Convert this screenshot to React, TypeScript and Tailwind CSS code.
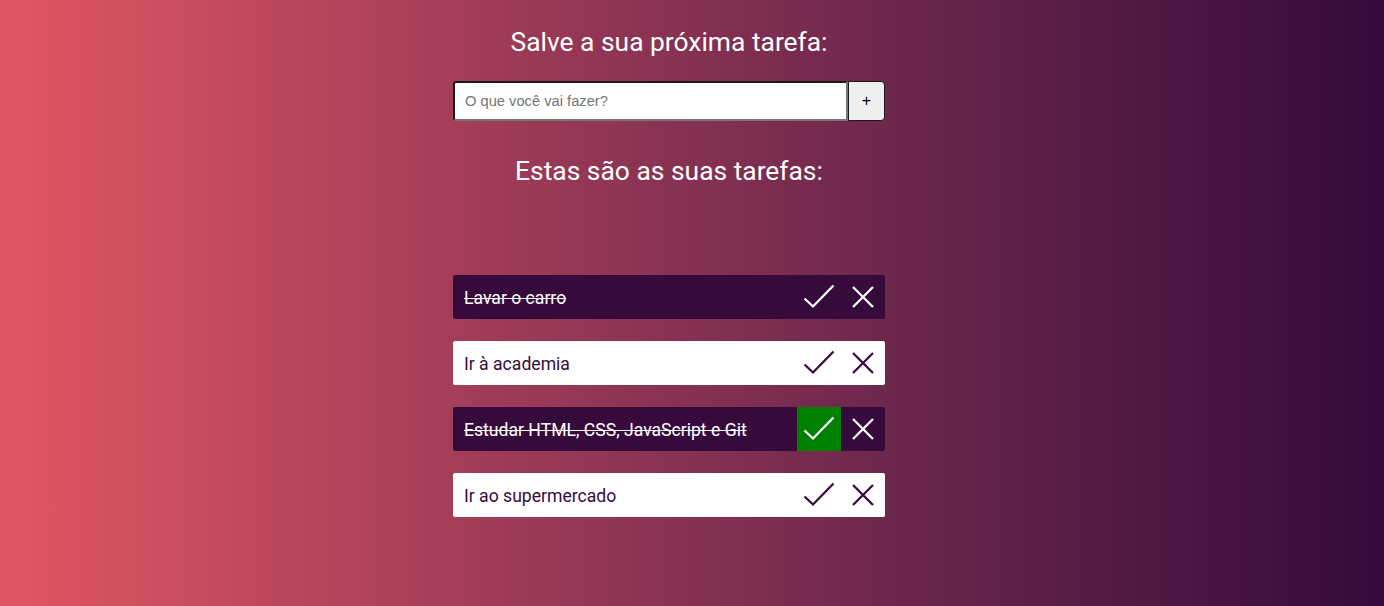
import { useState } from 'react';

type Task = { id: number; text: string; done: boolean; hover?: boolean };

const initialTasks: Task[] = [
  { id: 1, text: 'Lavar o carro', done: true },
  { id: 2, text: 'Ir à academia', done: false },
  { id: 3, text: 'Estudar HTML, CSS, JavaScript e Git', done: true, hover: true },
  { id: 4, text: 'Ir ao supermercado', done: false },
];

function CheckIcon() {
  return (
    <svg width="32" height="26" viewBox="0 0 32 26" fill="none">
      <path d="M1.5 14.5 L10 22.5 L30.5 1.5" stroke="currentColor" strokeWidth="2.3" />
    </svg>
  );
}

function XIcon() {
  return (
    <svg width="24" height="24" viewBox="0 0 24 24" fill="none">
      <path d="M2 2 L22 22 M22 2 L2 22" stroke="currentColor" strokeWidth="2.3" />
    </svg>
  );
}

export default function App() {
  const [tasks, setTasks] = useState<Task[]>(initialTasks);
  const [input, setInput] = useState('');

  const addTask = (e: React.FormEvent) => {
    e.preventDefault();
    if (input.trim()) {
      setTasks([...tasks, { id: Date.now(), text: input, done: false }]);
      setInput('');
    }
  };

  const toggle = (id: number) =>
    setTasks(tasks.map((t) => (t.id === id ? { ...t, done: !t.done } : t)));
  const remove = (id: number) => setTasks(tasks.filter((t) => t.id !== id));

  return (
    <div
      className="min-h-screen w-full bg-gradient-to-r from-[#e25663] to-[#350a3b] flex flex-col items-center pr-[46px] font-['Roboto',sans-serif]"
    >
      <h1 className="text-white text-[26.4px] mt-[24px] leading-[36px]">Salve a sua próxima tarefa:</h1>

      <form onSubmit={addTask} className="flex mt-[21px] w-[432px] h-[40px]">
        <input
          type="text"
          value={input}
          onChange={(e) => setInput(e.target.value)}
          placeholder="O que você vai fazer?"
          className="w-[395px] h-full bg-white px-[10px] text-[14.7px] font-['Liberation_Sans',sans-serif] rounded-l-[3px] border-2 border-t-[#1a1a1a] border-l-[#1a1a1a] border-b-[#767676] border-r-[#767676] placeholder:text-[#757575] outline-none"
        />
        <button
          type="submit"
          className="w-[37px] h-full bg-[#efefef] border border-[#1a1a1a] rounded-r-[4px] text-[16px] text-black font-['Liberation_Sans',sans-serif]"
        >
          +
        </button>
      </form>

      <h2 className="text-white text-[26.4px] mt-[32px] leading-[36px]">Estas são as suas tarefas:</h2>

      <ul className="mt-[86px] flex flex-col gap-[22px] w-[432px]">
        {tasks.map((t) => (
          <li
            key={t.id}
            className={`flex items-center h-[44px] rounded-[2px] overflow-hidden ${
              t.done ? 'bg-[#370a3c] text-white' : 'bg-white text-[#370a3c]'
            }`}
          >
            <span className={`flex-1 pl-[11px] pt-[3px] text-[17.6px] ${t.done ? 'line-through' : ''}`}>{t.text}</span>
            <button
              onClick={() => toggle(t.id)}
              className={`w-[44px] h-full flex items-center justify-center ${t.hover ? 'bg-[#008000] text-white' : ''}`}
            >
              <CheckIcon />
            </button>
            <button onClick={() => remove(t.id)} className="w-[44px] h-full flex items-center justify-center">
              <XIcon />
            </button>
          </li>
        ))}
      </ul>
    </div>
  );
}
